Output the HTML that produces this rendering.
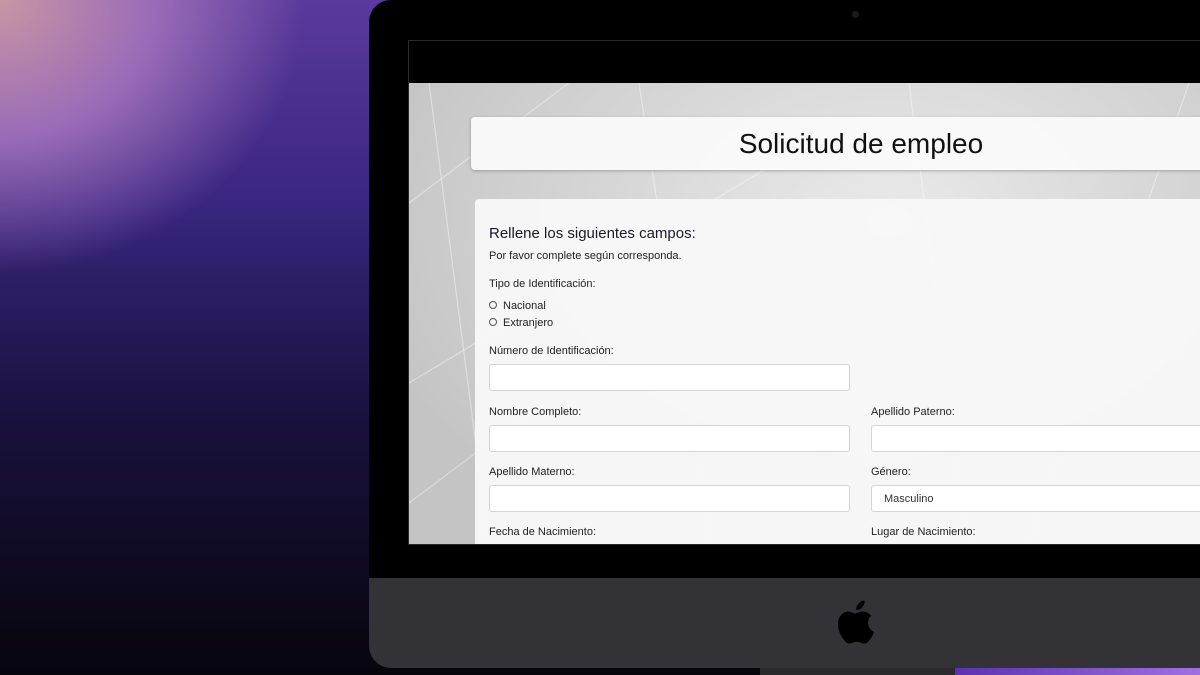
<!DOCTYPE html>
<html><head><meta charset="utf-8"><style>
*{margin:0;padding:0;box-sizing:border-box}
body{width:1200px;height:675px;overflow:hidden;position:relative;font-family:"Liberation Sans",sans-serif;
background:radial-gradient(ellipse 380px 340px at 0px 0px,#c995a3 0%,#9a6cb8 40%,rgba(90,60,160,0) 80%),linear-gradient(180deg,#5a3a9c 0%,#3a2680 30%,#1a1240 60%,#07050c 100%);}
.abs{position:absolute}
.imac{left:369px;top:0;width:870px;height:668px;background:#000;border-radius:22px;overflow:hidden}
.chin{left:0;top:578px;width:100%;height:90px;background:#333237}
.screen{left:408px;top:40px;width:800px;height:505px;background:#000;border:1px solid #2a2a2a;overflow:hidden}
.page{left:0;top:42px;width:800px;height:463px;background:radial-gradient(ellipse at 60% 30%,#eaeaea,#c4c4c4 80%);}
.title{left:62px;top:34px;width:780px;height:53px;background:rgba(250,250,250,.95);border-radius:4px;box-shadow:0 1px 3px rgba(0,0,0,.25);text-align:center;font-size:28px;line-height:53px;color:#111}
.form{left:66px;top:116px;width:740px;height:360px;background:rgba(248,248,248,.96);border-radius:4px}
.l{position:absolute;font-size:11px;color:#222}
.inp{position:absolute;height:27px;background:#fff;border:1px solid #d4d4d4;border-radius:3px;font-size:11px;color:#333;padding:7px 12px}
.r{position:absolute;width:8px;height:8px;border:1px solid #555;border-radius:50%}
</style></head><body>
<div class="abs" style="left:760px;top:668px;width:195px;height:7px;background:#2b2a2f"></div>
<div class="abs" style="left:955px;top:668px;width:245px;height:7px;background:linear-gradient(90deg,#5b33b0,#a070e0)"></div>
<div class="abs imac">
 <div class="abs chin">
  <svg class="abs" style="left:469px;top:21px" width="36" height="45" viewBox="0 0 814 1000"><path fill="#000" d="M788 341c-6 4-108 62-108 190 0 148 130 200 134 202-1 3-21 72-69 142-43 62-88 124-156 124s-86-40-165-40c-77 0-104 41-166 41s-106-57-156-127C44 790 0 670 0 556c0-183 119-280 236-280 62 0 114 41 153 41 37 0 95-43 166-43 27 0 124 2 188 97zM554 171c29-35 50-83 50-131 0-7-1-14-2-19-47 2-104 32-138 72-27 30-52 78-52 127 0 7 1 15 2 17 3 1 8 1 13 1 43 0 96-28 127-67z"/></svg>
 </div>
 <div class="abs" style="left:483px;top:11px;width:7px;height:7px;border-radius:50%;background:#1a1a1a"></div>
</div>
<div class="abs screen">
 <div class="abs page">
  <svg class="abs" style="left:0;top:0" width="800" height="463"><g stroke="#fff" stroke-opacity=".4" fill="none" stroke-width="1.2">
   <line x1="0" y1="120" x2="160" y2="0"/><line x1="20" y1="0" x2="80" y2="463"/><line x1="0" y1="300" x2="400" y2="60"/><line x1="230" y1="0" x2="300" y2="463"/><line x1="0" y1="420" x2="120" y2="330"/><line x1="500" y1="0" x2="560" y2="463"/><line x1="780" y1="0" x2="620" y2="463"/></g></svg>
  <div class="abs title">Solicitud de empleo</div>
  <div class="abs form">
   <div class="l" style="left:14px;top:26px;font-size:15px;color:#1a1a2a">Rellene los siguientes campos:</div>
   <div class="l" style="left:14px;top:51px">Por favor complete según corresponda.</div>
   <div class="l" style="left:14px;top:79px">Tipo de Identificación:</div>
   <div class="r" style="left:14px;top:102px"></div><div class="l" style="left:28px;top:101px">Nacional</div>
   <div class="r" style="left:14px;top:119px"></div><div class="l" style="left:28px;top:118px">Extranjero</div>
   <div class="l" style="left:14px;top:146px">Número de Identificación:</div>
   <div class="inp" style="left:14px;top:165px;width:361px"></div>
   <div class="l" style="left:14px;top:207px">Nombre Completo:</div>
   <div class="inp" style="left:14px;top:226px;width:361px"></div>
   <div class="l" style="left:396px;top:207px">Apellido Paterno:</div>
   <div class="inp" style="left:396px;top:226px;width:361px"></div>
   <div class="l" style="left:14px;top:267px">Apellido Materno:</div>
   <div class="inp" style="left:14px;top:286px;width:361px"></div>
   <div class="l" style="left:396px;top:267px">Género:</div>
   <div class="inp" style="left:396px;top:286px;width:361px">Masculino</div>
   <div class="l" style="left:14px;top:327px">Fecha de Nacimiento:</div>
   <div class="l" style="left:396px;top:327px">Lugar de Nacimiento:</div>
  </div>
 </div>
</div>
</body></html>
